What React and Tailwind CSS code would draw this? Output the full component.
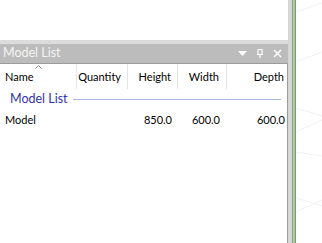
export default function App() {
  const font = { fontFamily: 'Lato, "Noto Sans", sans-serif' };
  return (
    <div className="w-[322px] h-[243px] flex bg-white overflow-hidden text-[11px] text-black" style={font}>
      <div className="w-[288px] flex flex-col">
        <div className="h-[40px] bg-white"></div>
        <div className="h-[4px] bg-[#dcdcdc]"></div>
        <div className="h-[19px] bg-[#bcbcbc] flex items-center pl-[3px] pr-[6px]">
          <span className="text-[#f4f4f4] text-[12.5px] leading-none">Model List</span>
          <div className="ml-auto flex items-center gap-[7px]">
            <svg width="9" height="6" viewBox="0 0 9 6"><path d="M0 0H9L4.5 5Z" fill="#fff" /></svg>
            <svg width="8" height="9" viewBox="0 0 8 9" className="ml-[2px]">
              <path d="M2 0.5H6V5.5M2 0.5V5.5M1 5.5H7M4 5.5V9" stroke="#fff" strokeWidth="1.2" fill="none" />
            </svg>
            <svg width="9" height="9" viewBox="0 0 9 9" className="ml-[2px]">
              <path d="M1 1L8 8M8 1L1 8" stroke="#fff" strokeWidth="1.5" />
            </svg>
          </div>
        </div>
        <div className="flex-1 bg-white border-t border-r border-[#9c9c9c] flex flex-col">
          <div className="h-[25px] flex relative">
            <svg width="7" height="4" viewBox="0 0 7 4" className="absolute left-[35px] top-[1px]">
              <path d="M0.5 3.5L3.5 0.5L6.5 3.5" stroke="#8a8a8a" fill="none" />
            </svg>
            <div className="w-[77px] border-r border-[#e5e5e5] flex items-center pt-[2px] pl-[5px]">Name</div>
            <div className="w-[51px] border-r border-[#e5e5e5] flex items-center pt-[2px] justify-end pr-[6px]">Quantity</div>
            <div className="w-[50px] border-r border-[#e5e5e5] flex items-center pt-[2px] justify-end pr-[6px]">Height</div>
            <div className="w-[49px] border-r border-[#e5e5e5] flex items-center pt-[2px] justify-end pr-[7px]">Width</div>
            <div className="flex-1 flex items-center pt-[2px] justify-end pr-[3px]">Depth</div>
          </div>
          <div className="h-[20px] flex items-center pl-[10px] pr-[6px]">
            <span className="text-[#3333aa] text-[12.5px]">Model List</span>
            <div className="flex-1 h-px bg-[#a9b8e0] ml-[5px]"></div>
          </div>
          <div className="h-[20px] flex pt-[2px]">
            <div className="w-[77px] flex items-center pl-[5px]">Model</div>
            <div className="w-[51px]"></div>
            <div className="w-[50px] flex items-center justify-end pr-[6px]">850.0</div>
            <div className="w-[49px] flex items-center justify-end pr-[7px]">600.0</div>
            <div className="flex-1 flex items-center justify-end pr-[2px]">600.0</div>
          </div>
        </div>
      </div>
      <div className="w-[4px] bg-[#d6d6d6]"></div>
      <div className="w-[1px] bg-[#9a9a9a]"></div>
      <div className="w-[2px] bg-[#9ed884]"></div>
      <div className="w-[1px] bg-[#8a8a8a]"></div>
      <div className="flex-1 relative">
        <svg width="26" height="243" className="absolute inset-0">
          <path d="M0 12L26 3M0 62L26 52M0 108L26 116M0 132L26 120M0 152L26 156M0 198L26 206M0 212L26 200" stroke="#eef0f6" strokeWidth="1" fill="none" />
        </svg>
      </div>
    </div>
  );
}
